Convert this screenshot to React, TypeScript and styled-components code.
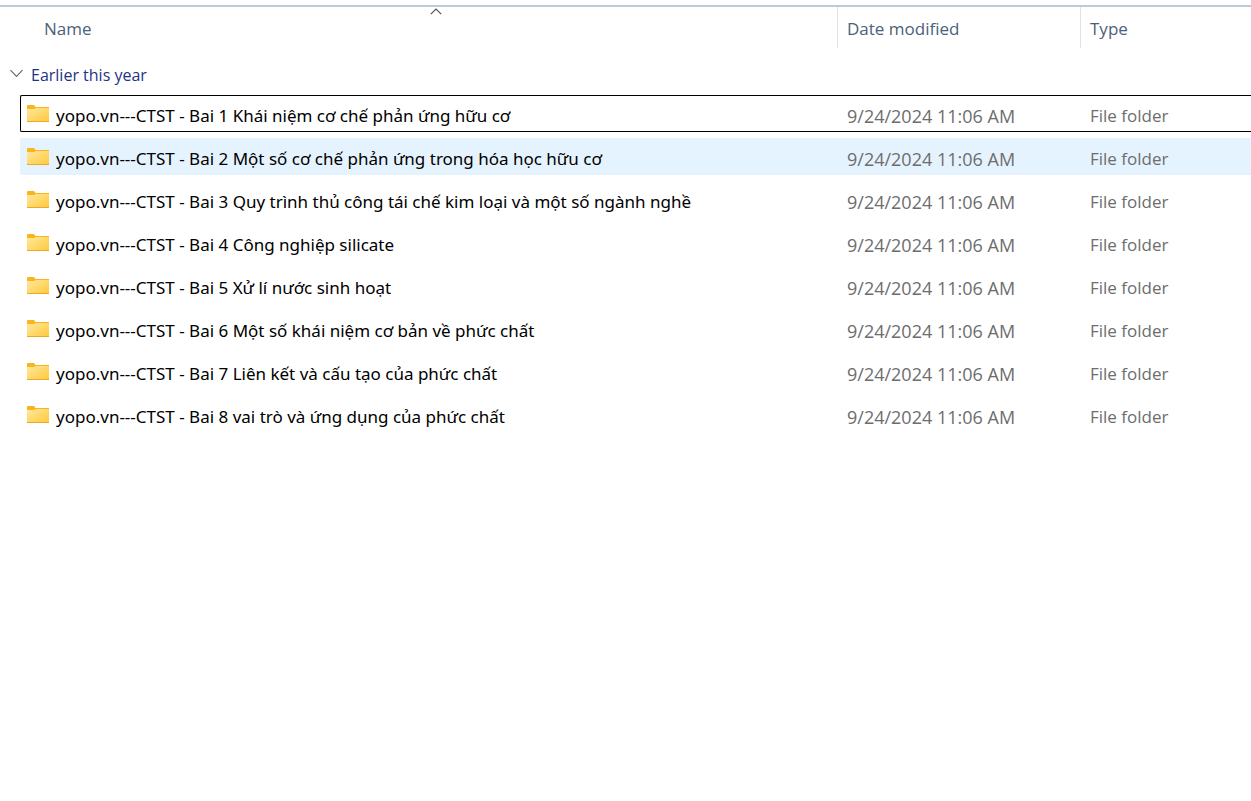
import React, { useState } from "react";
import styled, { createGlobalStyle } from "styled-components";

const GlobalStyle = createGlobalStyle`
  * { box-sizing: border-box; }
  body {
    margin: 0;
    background: #ffffff;
    font-family: "Segoe UI", "Open Sans", "Noto Sans", sans-serif;
    font-size: 17px;
    line-height: 24px;
    color: #000000;
  }
`;

const Pane = styled.main`
  padding-top: 5px;
  overflow: hidden;
`;

const FileTable = styled.table`
  display: block;
  width: 100%;
  border-top: 2px solid #bccbd8;
`;

const TableHead = styled.thead`
  display: block;
`;

const Columns = styled.tr`
  display: grid;
  grid-template-columns: minmax(0, 1fr) 243px 171px;
`;

const HeaderRow = styled(Columns)`
  padding-left: 35px;
  height: 41px;
`;

const HeaderCell = styled.th<{ $divided?: boolean }>`
  padding: 0;
  font-weight: 400;
  border-left: ${(p) => (p.$divided ? "1px solid #e2e2e2" : "0")};
`;

const HeaderButton = styled.button`
  position: relative;
  display: flex;
  align-items: center;
  width: 100%;
  height: 100%;
  padding: 2px 9px 0;
  border: 0;
  background: transparent;
  font: inherit;
  color: #4c607a;
`;

const SortMark = styled.svg`
  position: absolute;
  top: 1px;
  left: 50%;
  width: 12px;
  height: 7px;
  margin-left: -6px;
`;

const Group = styled.tbody`
  display: grid;
  row-gap: 6px;
`;

const GroupRow = styled.tr`
  display: block;
  padding: 15px 0 2px 10px;
`;

const GroupCell = styled.th`
  display: block;
  padding: 0;
  text-align: left;
  font-weight: 400;
`;

const GroupButton = styled.button`
  display: flex;
  align-items: center;
  gap: 8px;
  padding: 0;
  border: 0;
  background: transparent;
  font: inherit;
  font-size: 16px;
  color: #1e3287;
`;

const Chevron = styled.svg<{ $open: boolean }>`
  width: 13px;
  height: 9px;
  margin-bottom: 4px;
  transform: ${(p) => (p.$open ? "none" : "rotate(-90deg)")};
`;

const FileRow = styled(Columns)<{ $focused: boolean; $hovered: boolean }>`
  height: 37px;
  margin-left: 20px;
  border: 1px solid ${(p) => (p.$focused ? "#000000" : "transparent")};
  border-right: 0;
  border-radius: 2px 0 0 2px;
  background: ${(p) => (p.$hovered ? "#e5f3ff" : "transparent")};
`;

const Cell = styled.td`
  display: flex;
  align-items: center;
  padding: 5px 0 0 10px;
  white-space: nowrap;
  color: #6d6d6d;
`;

const NameCell = styled(Cell)`
  gap: 7px;
  padding-left: 6px;
  font-family: "Segoe UI", "Noto Sans", "Open Sans", sans-serif;
  color: #000000;
`;

const DateCell = styled(Cell)`
  font-size: 18px;
`;

const FolderSvg = styled.svg`
  flex: none;
  width: 22px;
  height: 18px;
  margin-bottom: 4px;
`;

function FolderIcon() {
  return (
    <FolderSvg viewBox="0 0 22 18" aria-hidden="true">
      <defs>
        <linearGradient id="folderFront" x1="0" y1="0" x2="1" y2="1">
          <stop offset="0" stopColor="#ffe8a0" />
          <stop offset="1" stopColor="#ffc938" />
        </linearGradient>
      </defs>
      <path d="M0 1Q0 0 1 0H7L8.5 2H22V5H0Z" fill="#f9b51c" />
      <path d="M0 4H7.2L8.7 3H22V17H0Z" fill="url(#folderFront)" />
      <path d="M0 16H22V17H0Z" fill="#eba92c" />
    </FolderSvg>
  );
}

const modified = "9/24/2024 11:06 AM";

const folders = [
  "yopo.vn---CTST - Bai 1 Khái niệm cơ chế phản ứng hữu cơ",
  "yopo.vn---CTST - Bai 2 Một số cơ chế phản ứng trong hóa học hữu cơ",
  "yopo.vn---CTST - Bai 3 Quy trình thủ công tái chế kim loại và một số ngành nghề",
  "yopo.vn---CTST - Bai 4 Công nghiệp silicate",
  "yopo.vn---CTST - Bai 5 Xử lí nước sinh hoạt",
  "yopo.vn---CTST - Bai 6 Một số khái niệm cơ bản về phức chất",
  "yopo.vn---CTST - Bai 7 Liên kết và cấu tạo của phức chất",
  "yopo.vn---CTST - Bai 8 vai trò và ứng dụng của phức chất",
];

export default function App() {
  const [open, setOpen] = useState(true);
  const [focused, setFocused] = useState(0);
  const [hovered, setHovered] = useState(1);

  return (
    <Pane>
      <GlobalStyle />
      <FileTable>
        <TableHead>
          <HeaderRow>
            <HeaderCell scope="col" aria-sort="ascending">
              <HeaderButton type="button">
                Name
                <SortMark viewBox="0 0 12 7" aria-hidden="true">
                  <path d="M.8 6.2 6 1 11.2 6.2" fill="none" stroke="#555555" strokeWidth="1.2" />
                </SortMark>
              </HeaderButton>
            </HeaderCell>
            <HeaderCell scope="col" $divided>
              <HeaderButton type="button">Date modified</HeaderButton>
            </HeaderCell>
            <HeaderCell scope="col" $divided>
              <HeaderButton type="button">Type</HeaderButton>
            </HeaderCell>
          </HeaderRow>
        </TableHead>
        <Group>
          <GroupRow>
            <GroupCell scope="rowgroup">
              <GroupButton type="button" aria-expanded={open} onClick={() => setOpen(!open)}>
                <Chevron $open={open} viewBox="0 0 13 9" aria-hidden="true">
                  <path d="M.5 1.2 6.5 7.4 12.5 1.2" fill="none" stroke="#6b6b6b" strokeWidth="1.2" />
                </Chevron>
                Earlier this year
              </GroupButton>
            </GroupCell>
          </GroupRow>
          {open &&
            folders.map((name, i) => (
              <FileRow
                key={name}
                $focused={i === focused}
                $hovered={i === hovered}
                onClick={() => setFocused(i)}
                onMouseMove={() => setHovered(i)}
              >
                <NameCell>
                  <FolderIcon />
                  {name}
                </NameCell>
                <DateCell>{modified}</DateCell>
                <Cell>File folder</Cell>
              </FileRow>
            ))}
        </Group>
      </FileTable>
    </Pane>
  );
}
